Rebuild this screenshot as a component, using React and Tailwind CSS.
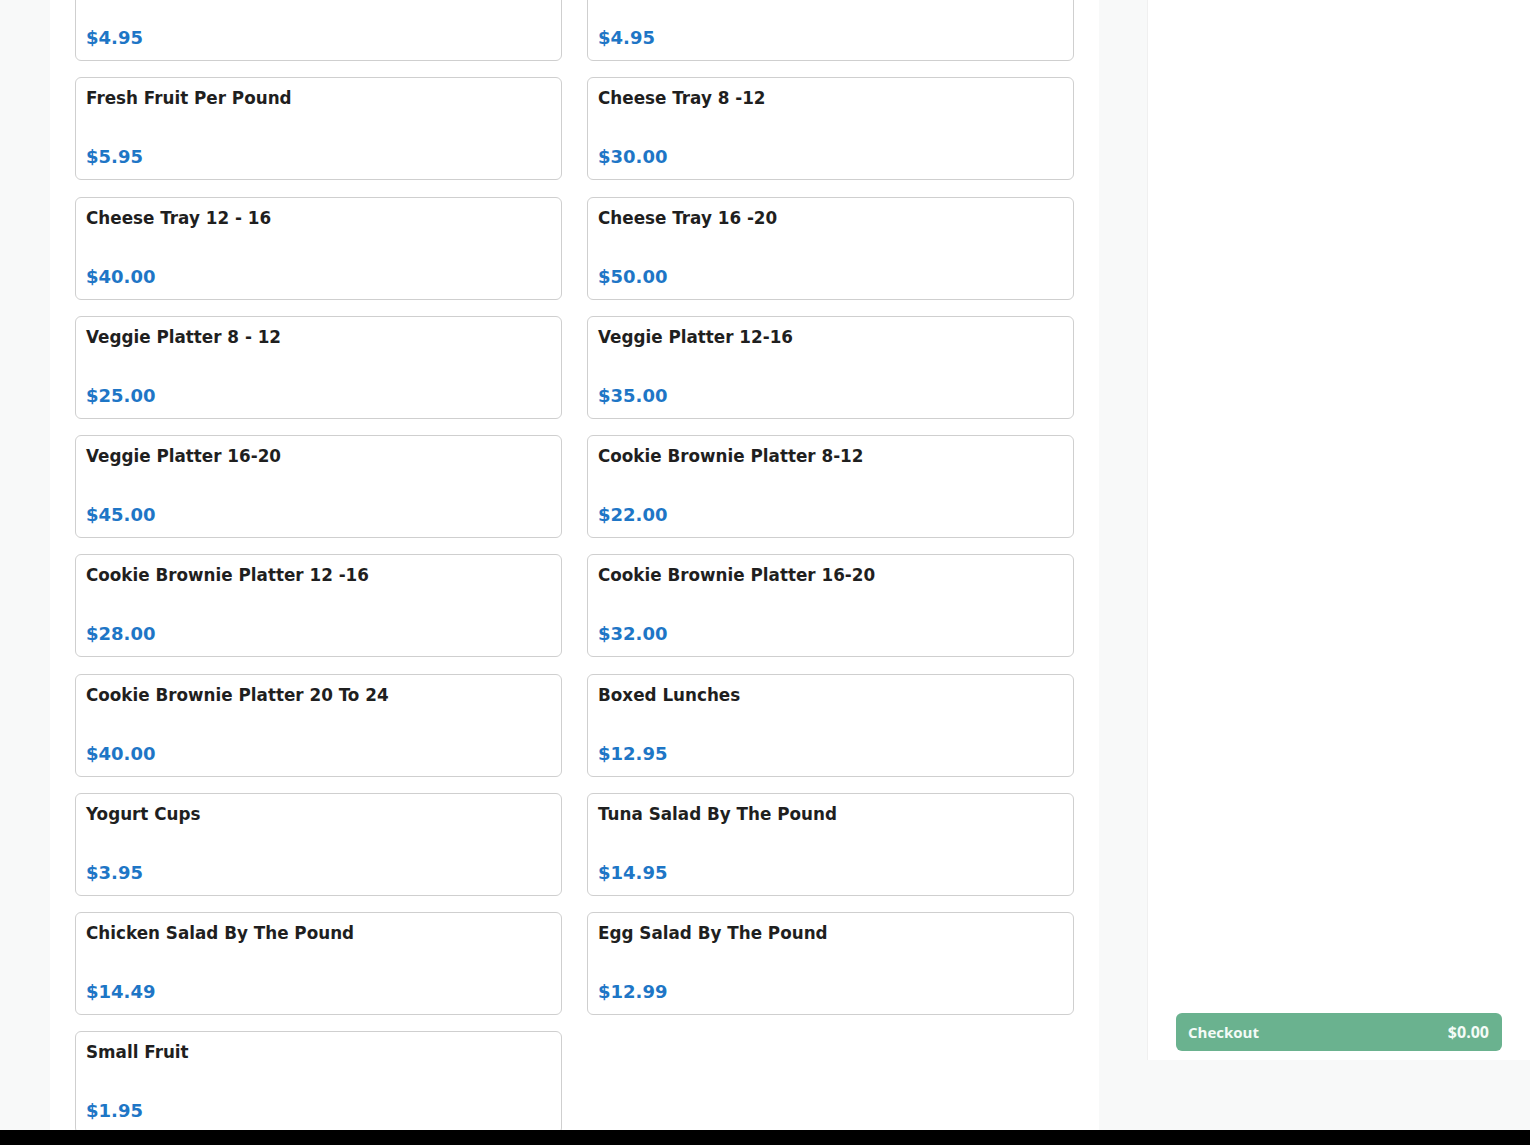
const items = [
    { name: '', price: '$4.95' },
    { name: '', price: '$4.95' },
    { name: 'Fresh Fruit Per Pound', price: '$5.95' },
    { name: 'Cheese Tray 8 -12', price: '$30.00' },
    { name: 'Cheese Tray 12 - 16', price: '$40.00' },
    { name: 'Cheese Tray 16 -20', price: '$50.00' },
    { name: 'Veggie Platter 8 - 12', price: '$25.00' },
    { name: 'Veggie Platter 12-16', price: '$35.00' },
    { name: 'Veggie Platter 16-20', price: '$45.00' },
    { name: 'Cookie Brownie Platter 8-12', price: '$22.00' },
    { name: 'Cookie Brownie Platter 12 -16', price: '$28.00' },
    { name: 'Cookie Brownie Platter 16-20', price: '$32.00' },
    { name: 'Cookie Brownie Platter 20 To 24', price: '$40.00' },
    { name: 'Boxed Lunches', price: '$12.95' },
    { name: 'Yogurt Cups', price: '$3.95' },
    { name: 'Tuna Salad By The Pound', price: '$14.95' },
    { name: 'Chicken Salad By The Pound', price: '$14.49' },
    { name: 'Egg Salad By The Pound', price: '$12.99' },
    { name: 'Small Fruit', price: '$1.95' },
];

const ItemCard = ({ item }) => (
    <div className="h-[103px] bg-white border border-[#cfcfcf] rounded-[6px] px-[10px] pt-[9px] pb-[10px] flex flex-col justify-between">
        <p className="text-[16.8px] leading-[22px] font-bold text-[#1f1f1f]">{item.name}</p>
        <p className="text-[18px] leading-[24px] font-bold text-[#1e76c6]">{item.price}</p>
    </div>
);

export default function App() {
    return (
        <div className="w-[1530px] h-[1145px] overflow-hidden flex flex-col bg-[#f8f9f9]" style={{ fontFamily: '"DejaVu Sans", sans-serif' }}>
            <div className="h-[1130px] flex overflow-hidden">
                <div className="w-[50px] shrink-0" />
                {/* Menu items */}
                <main className="w-[1049px] shrink-0 bg-white px-[25px] overflow-hidden">
                    <div className="grid grid-cols-2 gap-x-[25px] gap-y-[16.25px] mt-[-42px]">
                        {items.map((item, i) => (
                            <ItemCard key={i} item={item} />
                        ))}
                    </div>
                </main>
                <div className="w-[48px] shrink-0" />
                {/* Cart sidebar */}
                <aside className="w-[383px] h-[1060px] shrink-0 bg-white border-l border-[#f0f0f0] flex flex-col justify-end px-[28px] pb-[9px]">
                    <button className="h-[38px] w-full bg-[#6ab28f] rounded-[6px] pl-[12px] pr-[13px] flex items-center justify-between text-[#f4fbf7] text-[15px] font-bold" style={{ fontFamily: '"Open Sans", Lato, sans-serif' }}>
                        <span>Checkout</span>
                        <span className="text-[16px]">$0.00</span>
                    </button>
                </aside>
            </div>
            <div className="h-[15px] bg-black" />
        </div>
    );
}
